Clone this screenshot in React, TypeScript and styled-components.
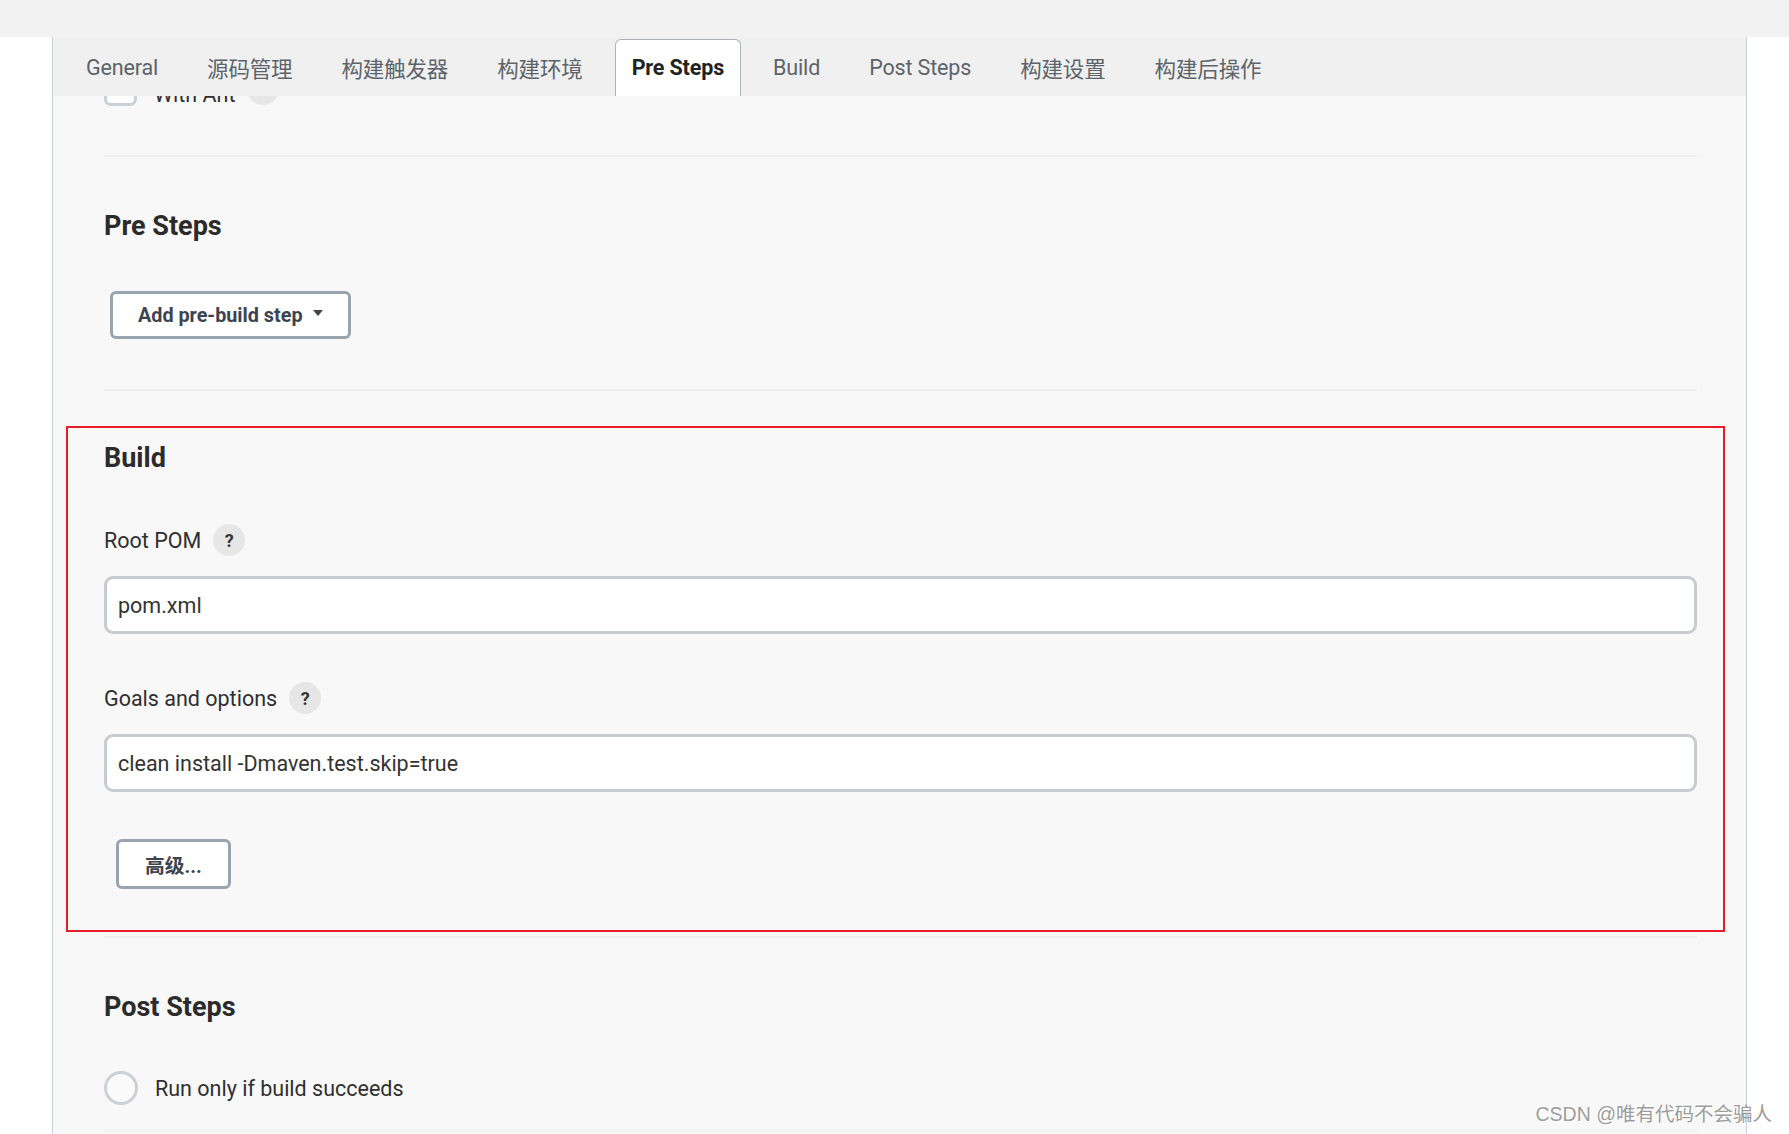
import React from "react";
import styled, { createGlobalStyle } from "styled-components";

const GlobalStyle = createGlobalStyle`
  html, body {
    margin: 0;
    padding: 0;
    background: #ffffff;
  }
  body {
    font-family: Roboto, "Noto Sans CJK SC", sans-serif;
    color: #333333;
  }
  * { box-sizing: border-box; }
`;

const Page = styled.div`
  position: relative;
  width: 1789px;
  height: 1134px;
  overflow: hidden;
  background: #ffffff;
`;

const TopStrip = styled.div`
  height: 37px;
  background: #f2f2f2;
`;

const Panel = styled.div`
  margin-left: 52px;
  width: 1695px;
  border-left: 1px solid #c9d0d5;
  border-right: 1px solid #c9d0d5;
  background: #f8f8f8;
  height: 1097px;
`;

const TabBar = styled.div`
  display: flex;
  align-items: flex-end;
  gap: 15px;
  height: 59px;
  padding-left: 16px;
  background: #f0f0f0;
`;

const Tab = styled.div<{ $active?: boolean }>`
  display: flex;
  align-items: center;
  height: 57px;
  padding: 0 16px 1px;
  font-size: 21.5px;
  letter-spacing: -0.15px;
  font-weight: ${(p) => (p.$active ? 700 : 400)};
  color: ${(p) => (p.$active ? "#222222" : "#5c636b")};
  background: ${(p) => (p.$active ? "#ffffff" : "transparent")};
  border: 1px solid ${(p) => (p.$active ? "#a9b3ba" : "transparent")};
  border-bottom: none;
  border-radius: 6px 6px 0 0;
  white-space: nowrap;
`;

const Content = styled.div`
  padding: 0 49px 0 51px;
`;

const Section = styled.section<{ $pt: number; $pb: number }>`
  position: relative;
  display: flex;
  flex-direction: column;
  align-items: flex-start;
  padding: ${(p) => `${p.$pt}px 0 ${p.$pb}px`};
  border-bottom: 2px solid #eeeeee;
`;

const PeekClip = styled.div`
  height: 10px;
  overflow: hidden;
  display: flex;
  flex-direction: column;
  justify-content: flex-end;
`;

const CheckRow = styled.div`
  display: flex;
  align-items: center;
  gap: 17px;
  height: 34px;
  flex-shrink: 0;
`;

const CheckBox = styled.span`
  width: 33px;
  height: 33px;
  border: 3px solid #c8d1d7;
  border-radius: 7px;
  background: #ffffff;
`;

const PeekText = styled.span`
  padding-top: 10px;
`;

const Heading = styled.h2<{ $mb: number }>`
  margin: 0 0 ${(p) => p.$mb}px;
  font-size: 27px;
  line-height: 32px;
  font-weight: 700;
  color: #2b2b2b;
`;

const OutlineButton = styled.button<{ $h: number; $px: number; $ml: number }>`
  display: inline-flex;
  align-items: center;
  gap: 10px;
  height: ${(p) => p.$h}px;
  margin-left: ${(p) => p.$ml}px;
  padding: 0 ${(p) => p.$px}px;
  background: #ffffff;
  border: 3px solid #98a4ae;
  border-radius: 6px;
  font-family: Roboto, "Noto Sans CJK SC", sans-serif;
  font-size: 19.8px;
  font-weight: 700;
  color: #3c4450;
`;

const Caret = styled.span`
  width: 0;
  height: 0;
  margin-top: -4px;
  border-left: 5.5px solid transparent;
  border-right: 5.5px solid transparent;
  border-top: 6px solid #3c4450;
`;

const Label = styled.div<{ $mb: number }>`
  display: flex;
  align-items: center;
  gap: 12px;
  height: 32px;
  margin-bottom: ${(p) => p.$mb}px;
  font-size: 21.5px;
  color: #2f2f2f;
`;

const Help = styled.span`
  display: inline-flex;
  align-items: center;
  justify-content: center;
  width: 32px;
  height: 32px;
  border-radius: 50%;
  background: #e6e6e6;
  font-size: 18px;
  font-weight: 700;
  color: #333333;
`;

const TextInput = styled.input<{ $mb: number }>`
  width: 100%;
  height: 58px;
  margin: 0 0 ${(p) => p.$mb}px;
  padding: 0 11px;
  border: 3px solid #c5cdd3;
  border-radius: 9px;
  background: #ffffff;
  font-family: Roboto, "Noto Sans CJK SC", sans-serif;
  font-size: 21.5px;
  color: #333333;
  outline: none;
`;

const Annotation = styled.div`
  position: absolute;
  top: 35px;
  bottom: 4px;
  left: -38px;
  right: -28px;
  border: 2px solid #ea1d25;
  pointer-events: none;
`;

const RadioRow = styled.label`
  display: flex;
  align-items: center;
  gap: 17px;
  height: 34px;
  font-size: 21.5px;
  color: #2f2f2f;
`;

const RadioCircle = styled.span`
  width: 34px;
  height: 34px;
  border-radius: 50%;
  border: 3px solid #c8d1d7;
  background: #fafafa;
`;

const LastSection = styled(Section)`
  border-bottom-color: #f1f1f1;
`;

const Watermark = styled.div`
  position: absolute;
  right: 17px;
  bottom: 8px;
  font-family: "Liberation Sans", "Noto Sans CJK SC", sans-serif;
  font-size: 19.5px;
  line-height: 24px;
  color: #9c9c9c;
  text-shadow: 1px 1px 0 #ffffff, -1px -1px 0 #ffffff;
`;

const tabs = ["General", "源码管理", "构建触发器", "构建环境", "Pre Steps", "Build", "Post Steps", "构建设置", "构建后操作"];

export default function App() {
  return (
    <Page>
      <GlobalStyle />
      <TopStrip />
      <Panel>
        <TabBar>
          {tabs.map((t) => (
            <Tab key={t} $active={t === "Pre Steps"}>
              {t}
            </Tab>
          ))}
        </TabBar>
        <Content>
          <Section $pt={0} $pb={49}>
            <PeekClip>
              <CheckRow>
                <CheckBox />
                <Label $mb={0}>
                  <PeekText>With Ant</PeekText> <Help>?</Help>
                </Label>
              </CheckRow>
            </PeekClip>
          </Section>

          <Section $pt={53} $pb={50}>
            <Heading $mb={49}>Pre Steps</Heading>
            <OutlineButton $h={48} $px={25} $ml={6}>
              Add pre-build step <Caret />
            </OutlineButton>
          </Section>

          <Section $pt={51} $pb={47}>
            <Annotation />
            <Heading $mb={50}>Build</Heading>
            <Label $mb={20}>
              Root POM <Help>?</Help>
            </Label>
            <TextInput $mb={48} defaultValue="pom.xml" readOnly />
            <Label $mb={20}>
              Goals and options <Help>?</Help>
            </Label>
            <TextInput $mb={47} defaultValue="clean install -Dmaven.test.skip=true" readOnly />
            <OutlineButton $h={50} $px={26} $ml={12}>
              高级...
            </OutlineButton>
          </Section>

          <LastSection $pt={53} $pb={25}>
            <Heading $mb={48}>Post Steps</Heading>
            <RadioRow>
              <RadioCircle />
              Run only if build succeeds
            </RadioRow>
          </LastSection>
        </Content>
      </Panel>
      <Watermark>CSDN @唯有代码不会骗人</Watermark>
    </Page>
  );
}
